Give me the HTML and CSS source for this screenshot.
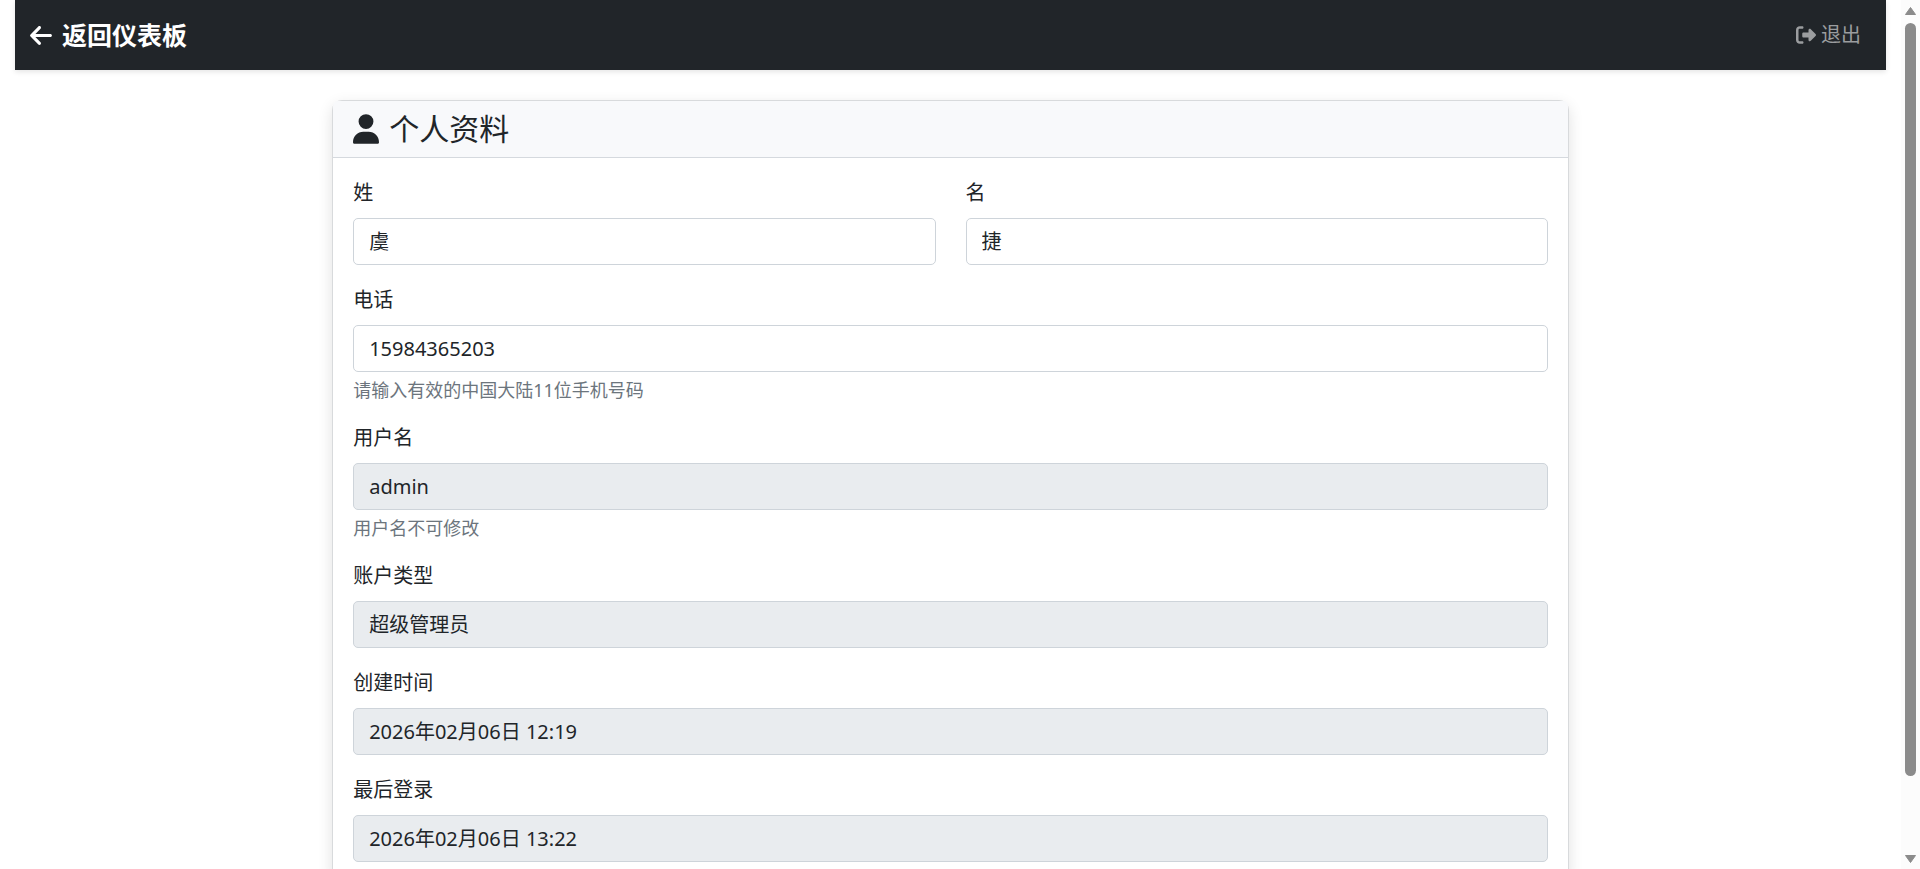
FILE: index.html
```html
<!DOCTYPE html>
<html lang="zh-CN">
<head>
<meta charset="utf-8">
<title>个人资料</title>
<link rel="stylesheet" href="styles.css">
</head>
<body>
<div class="page">
  <nav class="navbar">
    <a class="brand" href="#">
      <svg class="icon icon-arrow" viewBox="0 0 448 512" aria-hidden="true"><path d="M9.4 233.400c-12.500 12.500-12.500 32.800 0 45.300l160 160c12.500 12.500 32.800 12.500 45.300 0s12.500-32.800 0-45.300L109.200 288 416 288c17.700 0 32-14.300 32-32s-14.300-32-32-32l-306.700 0L214.600 118.600c12.500-12.500 12.500-32.800 0-45.300s-32.800-12.500-45.300 0l-160 160z"/></svg>
      <span>返回仪表板</span>
    </a>
    <a class="logout" href="#">
      <svg class="icon icon-logout" viewBox="0 0 512 512" aria-hidden="true"><path d="M377.900 105.900L500.700 228.700c7.200 7.200 11.300 17.100 11.300 27.300s-4.100 20.100-11.300 27.300L377.900 406.100c-6.400 6.400-15 9.900-24 9.900c-18.700 0-33.900-15.200-33.900-33.900l0-62.100-128 0c-17.700 0-32-14.300-32-32l0-64c0-17.700 14.300-32 32-32l128 0 0-62.100c0-18.700 15.200-33.900 33.900-33.900c9 0 17.600 3.600 24 9.900zM160 96L96 96c-17.700 0-32 14.300-32 32l0 256c0 17.700 14.300 32 32 32l64 0c17.700 0 32 14.300 32 32s-14.300 32-32 32l-64 0c-53 0-96-43-96-96L0 128C0 75 43 32 96 32l64 0c17.700 0 32 14.300 32 32s-14.300 32-32 32z"/></svg>
      <span>退出</span>
    </a>
  </nav>
  <main class="content">
    <div class="column">
      <form class="card">
        <header class="card-header">
          <svg class="icon icon-user" viewBox="0 0 448 512" aria-hidden="true"><path d="M224 256A128 128 0 1 0 224 0a128 128 0 1 0 0 256zm-45.700 48C79.800 304 0 383.800 0 482.300C0 498.700 13.300 512 29.700 512l388.600 0c16.400 0 29.700-13.300 29.700-29.700C448 383.800 368.200 304 269.700 304l-91.400 0z"/></svg>
          <h1 class="card-title">个人资料</h1>
        </header>
        <div class="card-body">
          <div class="name-row">
            <div class="field">
              <label class="label" for="last-name">姓</label>
              <input class="control" id="last-name" type="text" value="虞">
            </div>
            <div class="field">
              <label class="label" for="first-name">名</label>
              <input class="control" id="first-name" type="text" value="捷">
            </div>
          </div>
          <div class="field">
            <label class="label" for="phone">电话</label>
            <input class="control" id="phone" type="tel" value="15984365203">
            <p class="hint">请输入有效的中国大陆11位手机号码</p>
          </div>
          <div class="field">
            <label class="label" for="username">用户名</label>
            <input class="control" id="username" type="text" value="admin" readonly>
            <p class="hint">用户名不可修改</p>
          </div>
          <div class="field">
            <label class="label" for="role">账户类型</label>
            <input class="control" id="role" type="text" value="超级管理员" readonly>
          </div>
          <div class="field">
            <label class="label" for="created">创建时间</label>
            <input class="control" id="created" type="text" value="2026年02月06日 12:19" readonly>
          </div>
          <div class="field">
            <label class="label" for="last-login">最后登录</label>
            <input class="control" id="last-login" type="text" value="2026年02月06日 13:22" readonly>
          </div>
        </div>
      </form>
    </div>
  </main>
</div>
<div class="scrollbar" aria-hidden="true">
  <svg class="scroll-arrow" viewBox="0 0 13 10"><path d="M6.500 1.500L11.500 8.500H1.500z"/></svg>
  <div class="scroll-track"><div class="scroll-thumb"></div></div>
  <svg class="scroll-arrow" viewBox="0 0 13 10"><path d="M6.500 8.500L11.500 1.500H1.500z"/></svg>
</div>
</body>
</html>
```
FILE: styles.css
```css
* {
  box-sizing: border-box;
}

body {
  display: flex;
  height: 100vh;
  margin: 0;
  overflow: hidden;
  background: #fff;
  color: #212529;
  font-family: "Noto Sans", "Noto Sans CJK SC", sans-serif;
  font-size: 20px;
  line-height: 30px;
}

.page {
  flex: 1;
  min-width: 0;
  overflow-y: auto;
  scrollbar-width: none;
}

.navbar {
  display: flex;
  align-items: center;
  justify-content: space-between;
  margin: 0 15px;
  padding: 10px 25px 10px 15px;
  min-height: 70px;
  background: #212529;
  box-shadow: 0 2px 5px rgba(0, 0, 0, 0.1);
}

.brand,
.logout {
  display: flex;
  align-items: center;
  text-decoration: none;
}

.brand {
  gap: 10px;
  color: #fff;
  font-size: 25px;
  font-weight: 700;
}

.logout {
  gap: 5px;
  color: #9b9d9f;
}

.icon {
  flex: none;
  fill: currentColor;
}

.icon-arrow {
  width: 22px;
  height: 25px;
}

.icon-logout {
  width: 20px;
  height: 20px;
}

.icon-user {
  width: 26px;
  height: 30px;
}

.content {
  display: flex;
  justify-content: center;
  padding: 30px 5px;
}

.column {
  flex: 0 0 66.6667%;
  padding: 0 12px;
}

.card {
  border: 1px solid #d8dadc;
  border-radius: 10px;
  background: #fff;
  box-shadow: 0 5px 15px rgba(0, 0, 0, 0.12);
}

.card-header {
  display: flex;
  align-items: center;
  gap: 10px;
  padding: 10px 20px;
  border-bottom: 1px solid #d5d9de;
  border-radius: 5px 5px 0 0;
  background: #f8f9fb;
}

.card-title {
  margin: 0;
  font-size: 30px;
  font-weight: 400;
  line-height: 36px;
}

.card-body {
  display: flex;
  flex-direction: column;
  gap: 20px;
  padding: 20px;
}

.name-row {
  display: grid;
  grid-template-columns: 1fr 1fr;
  gap: 30px;
}

.label {
  display: block;
  margin-bottom: 10px;
}

.control {
  display: block;
  width: 100%;
  padding: 7px 15px;
  border: 1px solid #ced4da;
  border-radius: 5px;
  outline: 0;
  background: #fff;
  color: inherit;
  font: inherit;
  line-height: 31px;
}

.control:read-only {
  background: #e9ecef;
}

.hint {
  margin: 5px 0 0;
  color: #6c757d;
  font-size: 18px;
  line-height: 26px;
}

.scrollbar {
  display: flex;
  flex: none;
  flex-direction: column;
  align-items: center;
  gap: 7px;
  width: 19px;
  padding: 6px 0 5px;
  background: #fcfcfc;
}

.scroll-arrow {
  width: 13px;
  height: 10px;
  fill: #8b8b8b;
  stroke: #8b8b8b;
  stroke-linejoin: round;
}

.scroll-track {
  flex: 1;
  width: 11px;
}

.scroll-thumb {
  height: 91.4%;
  border-radius: 6px;
  background: #8b8b8b;
}
```
